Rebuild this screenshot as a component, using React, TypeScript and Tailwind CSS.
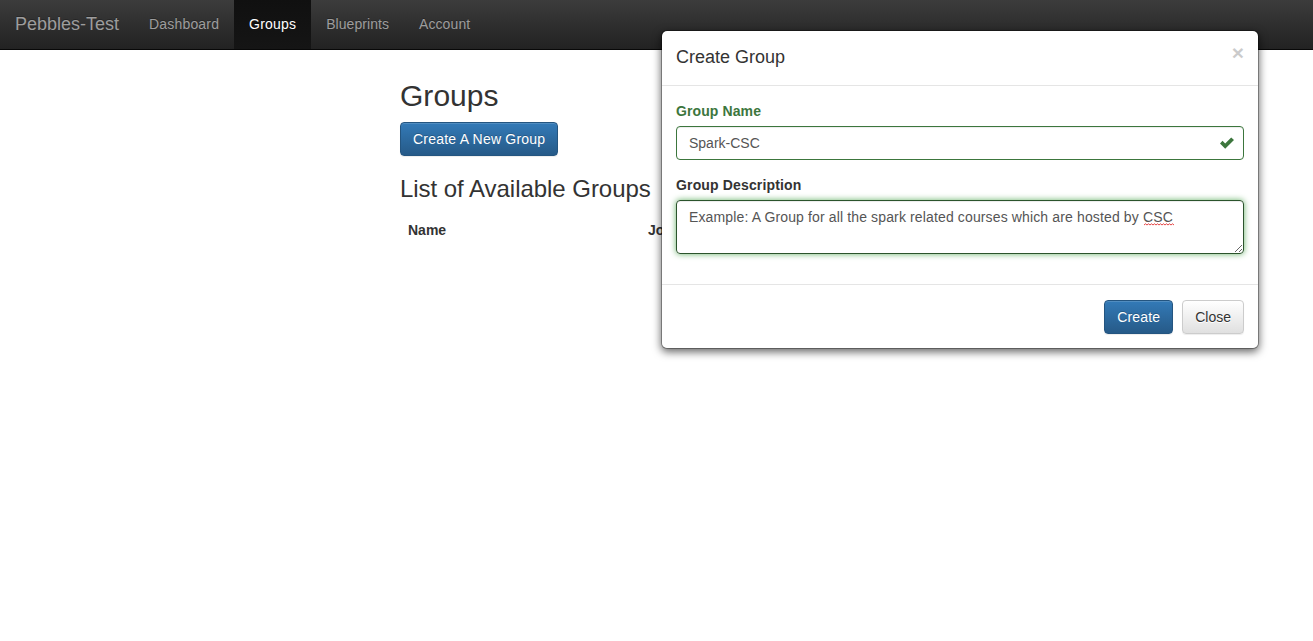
import React from 'react';

const navItems = [
  { label: 'Dashboard', tracking: 'tracking-[0.17px]' },
  { label: 'Groups', tracking: 'tracking-[0.2px]' },
  { label: 'Blueprints', tracking: 'tracking-[0.05px]' },
  { label: 'Account', tracking: 'tracking-[0.1px]' },
];

const primaryBtn =
  'h-[34px] px-3 rounded border border-[#245580] bg-gradient-to-b from-[#337ab7] to-[#265a88] text-sm text-white [text-shadow:0_-1px_0_rgba(0,0,0,0.2)] shadow-[inset_0_1px_0_rgba(255,255,255,0.15),0_1px_1px_rgba(0,0,0,0.075)]';

const CheckIcon = () => (
  <svg viewBox="0 0 14 14" className="absolute right-[10px] top-[10px] w-[14px] h-[14px] fill-[#3c763d]">
    <path d="M0 7.5 L2.5 4.8 L5.2 7.4 L11.2 1.4 L14 4 L5.2 12.8 Z" />
  </svg>
);

// red spell check squiggle under the last word of the description
const Squiggle = () => (
  <svg viewBox="0 0 30 3" className="absolute left-[468px] top-[23px] w-[30px] h-[3px] fill-none stroke-[#e03030] pointer-events-none">
    <path d="M0 2 L1.5 0.8 L3 2 L4.5 0.8 L6 2 L7.5 0.8 L9 2 L10.5 0.8 L12 2 L13.5 0.8 L15 2 L16.5 0.8 L18 2 L19.5 0.8 L21 2 L22.5 0.8 L24 2 L25.5 0.8 L27 2 L28.5 0.8 L30 2" strokeWidth="0.9" />
  </svg>
);

const Navbar = () => (
  <nav className="h-[50px] flex bg-gradient-to-b from-[#3c3c3c] to-[#222222] border-b border-[#080808] text-sm text-[#9d9d9d] [text-shadow:0_-1px_0_rgba(0,0,0,0.25)]">
    <a className="px-[15px] leading-[48px] text-lg">Pebbles-Test</a>
    {navItems.map(item => (
      <a
        key={item.label}
        className={
          item.label === 'Groups'
            ? `px-[15px] leading-[48px] text-white bg-gradient-to-b from-[#101010] to-[#151515] ${item.tracking}`
            : `px-[15px] leading-[48px] ${item.tracking}`
        }
      >
        {item.label}
      </a>
    ))}
  </nav>
);

const GroupsPage = () => (
  <main className="pl-[400px] text-[#333333]">
    <h1 className="mt-[29px] text-[30px] leading-[33px] font-medium tracking-[0.03px]">Groups</h1>
    <button className={`${primaryBtn} mt-[10px] block tracking-[0.22px]`}>Create A New Group</button>
    <h2 className="mt-[20px] text-2xl leading-[26px] font-medium tracking-[-0.04px]">List of Available Groups</h2>
    <table className="mt-[10px] w-[860px] text-sm">
      <thead>
        <tr>
          <th className="w-[240px] p-2 text-left font-bold leading-5">Name</th>
          <th className="p-2 text-left font-bold leading-5">Join Code</th>
        </tr>
      </thead>
    </table>
  </main>
);

const CreateGroupModal = () => (
  <div className="absolute left-[661px] top-[30px] w-[598px] bg-white bg-clip-padding border border-black/30 rounded-md shadow-[0_3px_9px_rgba(0,0,0,0.6)] text-sm text-[#333333]">
    <div className="relative h-[55px] px-[14px] pt-[13px] border-b border-[#e5e5e5]">
      <h4 className="text-lg leading-[26px] font-medium">Create Group</h4>
      <button className="absolute right-[14px] top-[8px] text-[21px] leading-[28px] font-bold text-black opacity-20">×</button>
    </div>
    <div className="px-[14px] pt-[15px] pb-[30px]">
      <label className="block h-[25px] font-bold leading-5 text-[#3c763d] tracking-[0.1px]">Group Name</label>
      <div className="relative">
        <input
          readOnly
          value="Spark-CSC"
          className="block w-full h-[34px] px-3 rounded border border-[#3c763d] text-[#555555] outline-none shadow-[inset_0_1px_1px_rgba(0,0,0,0.075)]"
        />
        <CheckIcon />
      </div>
      <label className="block mt-[15px] h-[25px] font-bold leading-5 tracking-[0.15px]">Group Description</label>
      <div className="relative">
        <textarea
          readOnly
          spellCheck={false}
          value="Example: A Group for all the spark related courses which are hosted by CSC"
          className="block w-full h-[54px] px-3 py-[6px] rounded border border-[#2b542c] text-[#555555] leading-5 tracking-[0.135px] outline-none resize-y shadow-[inset_0_1px_1px_rgba(0,0,0,0.075),0_0_6px_#67b168]"
        />
        <Squiggle />
      </div>
    </div>
    <div className="flex justify-end gap-[9px] px-[14px] pt-[15px] pb-[14px] border-t border-[#e5e5e5]">
      <button className={`${primaryBtn} tracking-[0.17px]`}>Create</button>
      <button className="h-[34px] px-3 rounded border border-[#cccccc] bg-gradient-to-b from-white to-[#e0e0e0] text-[#333333] [text-shadow:0_1px_0_#fff] shadow-[inset_0_1px_0_rgba(255,255,255,0.15),0_1px_1px_rgba(0,0,0,0.075)]">
        Close
      </button>
    </div>
  </div>
);

export default function App() {
  return (
    <div className="relative h-[641px] overflow-hidden bg-white font-['Liberation_Sans',Arial,sans-serif]">
      <Navbar />
      <GroupsPage />
      <CreateGroupModal />
    </div>
  );
}
